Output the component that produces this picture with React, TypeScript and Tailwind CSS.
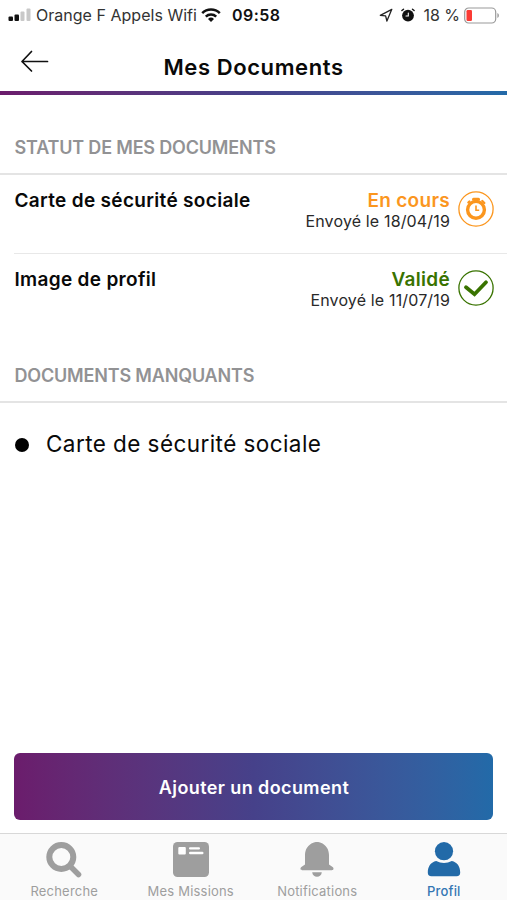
import type { ReactNode } from "react";

function SignalIcon() {
  return (
    <svg width="24" height="14" viewBox="0 0 24 14">
      <rect x="0.5" y="8.5" width="4.5" height="4.5" rx="1" fill="#111" />
      <rect x="6.5" y="6.5" width="4.5" height="6.5" rx="1" fill="#111" />
      <rect x="12.5" y="3.5" width="4" height="9.5" rx="1" fill="#c8c8c8" />
      <rect x="18.5" y="0.5" width="4" height="12.5" rx="1" fill="#c8c8c8" />
    </svg>
  );
}

function WifiIcon() {
  return (
    <svg width="20" height="14" viewBox="0 0 20 14" fill="none" stroke="#111" strokeWidth="2.5">
      <path d="M1.2 5.2a12.5 12.5 0 0 1 17.6 0" />
      <path d="M4.8 8.7a7.4 7.4 0 0 1 10.4 0" />
      <path d="M10 14 7 11a4.3 4.3 0 0 1 6 0Z" fill="#111" stroke="none" />
    </svg>
  );
}

function LocationIcon() {
  return (
    <svg width="14" height="14" viewBox="0 0 14 14" fill="none" stroke="#222" strokeWidth="1.3" strokeLinejoin="round">
      <path d="M12.8 1.3 1.3 7.3l5.3.5 1.3 5.2z" />
    </svg>
  );
}

function AlarmIcon() {
  return (
    <svg width="14" height="14" viewBox="0 0 14 14" fill="none" strokeLinecap="round">
      <circle cx="7" cy="7.6" r="5.9" fill="#111" />
      <path d="M.9 2.5 2.5 1.2M13.1 2.5l-1.6-1.3" stroke="#111" strokeWidth="1.4" />
      <path d="M7.3 5v3H5" stroke="#fff" strokeWidth="1.1" />
    </svg>
  );
}

function BatteryIcon() {
  return (
    <svg width="36" height="17" viewBox="0 0 36 17">
      <rect x="0.7" y="1" width="31" height="15" rx="4" fill="none" stroke="#999" strokeWidth="1.2" />
      <rect x="2.5" y="3" width="5.5" height="11" rx="1.2" fill="#fb3b35" />
      <path d="M33.4 6v5c2-.7 2-4.3 0-5Z" fill="#999" />
    </svg>
  );
}

function BackIcon() {
  return (
    <svg width="30" height="24" viewBox="0 0 30 24" fill="none" stroke="#111" strokeWidth="1.7" strokeLinecap="round" strokeLinejoin="round">
      <path d="M27.5 12.5H2M11.5 2.5 2 12.5l9.5 9.5" />
    </svg>
  );
}

function PendingIcon() {
  return (
    <svg width="36" height="36" viewBox="0 0 36 36" fill="none" stroke="#fb961e">
      <circle cx="18" cy="18" r="17.1" strokeWidth="1.3" />
      <circle cx="18" cy="18.8" r="8.4" strokeWidth="3.4" />
      <path d="M18 14.5v4.8h3.2" strokeWidth="1.6" />
      <path d="M15.5 8.3h5" strokeWidth="3" strokeLinecap="round" />
      <path d="m24.3 10 2 2M11.4 10.5l-1 1" strokeWidth="2.4" strokeLinecap="round" />
    </svg>
  );
}

function ValidIcon() {
  return (
    <svg width="36" height="36" viewBox="0 0 36 36" fill="none" stroke="#397300">
      <circle cx="18" cy="18" r="17.1" strokeWidth="1.3" />
      <path d="m8 17.2 8.5 7L28 12.3" strokeWidth="3.8" strokeLinecap="round" />
    </svg>
  );
}

function SearchIcon() {
  return (
    <svg width="36" height="36" viewBox="0 0 36 36" fill="none" stroke="#9e9e9e">
      <circle cx="15.3" cy="15" r="12" strokeWidth="6" />
      <path d="m24 24 8.5 8.5" strokeWidth="5.5" strokeLinecap="round" />
    </svg>
  );
}

function MissionsIcon() {
  return (
    <svg width="36" height="36" viewBox="0 0 36 36">
      <rect width="36" height="35" rx="4.5" fill="#9e9e9e" />
      <g fill="#fff">
        <rect x="5.3" y="5" width="7.5" height="7.5" rx="1" />
        <rect x="16" y="5.2" width="11" height="2.3" rx="1.1" />
        <rect x="16" y="9.8" width="14.5" height="2.4" rx="1.2" />
      </g>
    </svg>
  );
}

function BellIcon() {
  return (
    <svg width="36" height="36" viewBox="0 0 36 36" fill="#9e9e9e">
      <path d="M18 0c1.8 0 2.8.2 3.8.8C26.8 2.6 30 7.4 30 13v9.5l3.6 2.6c1.7 1.5.9 3.2-.8 3.2H3.2c-1.7 0-2.5-1.7-.8-3.2L6 22.5V13C6 7.4 9.2 2.6 14.2.8 15.2.2 16.2 0 18 0Z" />
      <path d="M13.2 30.2h9.6c-.3 2.8-2.2 4.6-4.8 4.6s-4.5-1.8-4.8-4.6Z" />
    </svg>
  );
}

function ProfileIcon() {
  return (
    <svg width="36" height="36" viewBox="0 0 36 36" fill="#226aa8">
      <circle cx="18" cy="9.2" r="9.1" />
      <path d="M10.2 19.1c5 2.5 10.6 2.5 15.6 0 5.3 1.2 8.4 5.3 8.4 11.4 0 2.6-1.2 3.7-3.6 3.7H5.4c-2.4 0-3.6-1.1-3.6-3.7 0-6.1 3.1-10.2 8.4-11.4Z" />
    </svg>
  );
}

function SectionTitle({ children }: { children: string }) {
  return <h2 className="border-b-2 border-[#e4e4e4] px-[14.5px] text-[18px] leading-6 font-semibold tracking-[-0.18px] text-[#929294]">{children}</h2>;
}

type DocumentRowProps = { title: string; status: string; date: string; color: string; icon: ReactNode };

function DocumentRow({ title, status, date, color, icon }: DocumentRowProps) {
  return (
    <div className="flex h-[78px] justify-between pt-[14px] pr-[13px] pl-[0.5px]">
      <div className="text-[19px] leading-6 font-semibold tracking-[0.32px]">{title}</div>
      <div className="flex items-start gap-2">
        <div className="text-right">
          <div className={`text-[19px] leading-6 font-semibold tracking-[0.3px] ${color}`}>{status}</div>
          <div className="text-[16px] leading-4 tracking-[0.15px] text-[#292929]">{date}</div>
        </div>
        <div className="mt-[1.5px]">{icon}</div>
      </div>
    </div>
  );
}

function Tab({ label, icon, active = false }: { label: string; icon: ReactNode; active?: boolean }) {
  return (
    <button className={`flex flex-1 flex-col items-center pt-2 text-[13px] leading-4 tracking-[0.2px] ${active ? "font-medium text-[#3476b3]" : "text-[#9e9e9e]"}`}>
      {icon}
      <span className="mt-[5px]">{label}</span>
    </button>
  );
}

export default function App() {
  return (
    <div className="flex h-[900px] w-[507px] flex-col overflow-hidden bg-white font-['Inter',sans-serif] text-[#090909]">
      <div className="flex h-[30px] shrink-0 items-center justify-between pr-[7px] pl-2 text-[16px] text-[#333]">
        <div className="flex items-center">
          <SignalIcon />
          <span className="ml-1 tracking-[0.02px]">Orange F Appels Wifi</span>
          <span className="ml-1"><WifiIcon /></span>
          <span className="ml-[11px] font-semibold tracking-[0.5px] text-[#111]">09:58</span>
        </div>
        <div className="flex items-center">
          <LocationIcon />
          <span className="ml-2"><AlarmIcon /></span>
          <span className="ml-2">18 %</span>
          <span className="ml-1"><BatteryIcon /></span>
        </div>
      </div>

      <header className="grid h-[61px] shrink-0 grid-cols-[1fr_auto_1fr] pl-5">
        <button className="mt-[19px] h-6 w-[30px]"><BackIcon /></button>
        <h1 className="mt-[23px] mr-5 text-[22px] leading-7 font-semibold tracking-[0.6px]">Mes Documents</h1>
      </header>
      <div className="h-1 shrink-0 bg-linear-to-r from-[#6b1c6c] via-[#46418a] to-[#226aa8]" />

      <main className="flex-1 pt-[41px] [&_h2]:h-[39px]">
        <SectionTitle>STATUT DE MES DOCUMENTS</SectionTitle>
        <div className="pl-[14px]">
          <DocumentRow title="Carte de sécurité sociale" status="En cours" date="Envoyé le 18/04/19" color="text-[#fb961e]" icon={<PendingIcon />} />
          <div className="h-px bg-[#e8e8e8]" />
          <DocumentRow title="Image de profil" status="Validé" date="Envoyé le 11/07/19" color="text-[#397300]" icon={<ValidIcon />} />
        </div>
        <div className="mt-8 [&_h2]:h-[38px]">
          <SectionTitle>DOCUMENTS MANQUANTS</SectionTitle>
        </div>
        <div className="mt-[25px] flex items-center pl-[15px] text-[22.5px] leading-8 tracking-[0.43px]">
          <span className="mt-[2px] mr-[17px] size-[14px] rounded-full bg-black" />
          Carte de sécurité sociale
        </div>
      </main>

      <div className="px-[14px] pb-[13px]">
        <button className="h-[67px] w-full rounded-[6px] bg-linear-to-r from-[#6b1c6c] via-[#46418a] to-[#226aa8] pt-0.5 pl-px text-[18px] font-semibold tracking-[0.4px] text-white">Ajouter un document</button>
      </div>

      <nav className="flex h-[67px] shrink-0 border-t border-[#d8d8d8] bg-[#fafafa] pl-px">
        <Tab label="Recherche" icon={<SearchIcon />} />
        <Tab label="Mes Missions" icon={<MissionsIcon />} />
        <Tab label="Notifications" icon={<BellIcon />} />
        <Tab label="Profil" icon={<ProfileIcon />} active />
      </nav>
    </div>
  );
}
